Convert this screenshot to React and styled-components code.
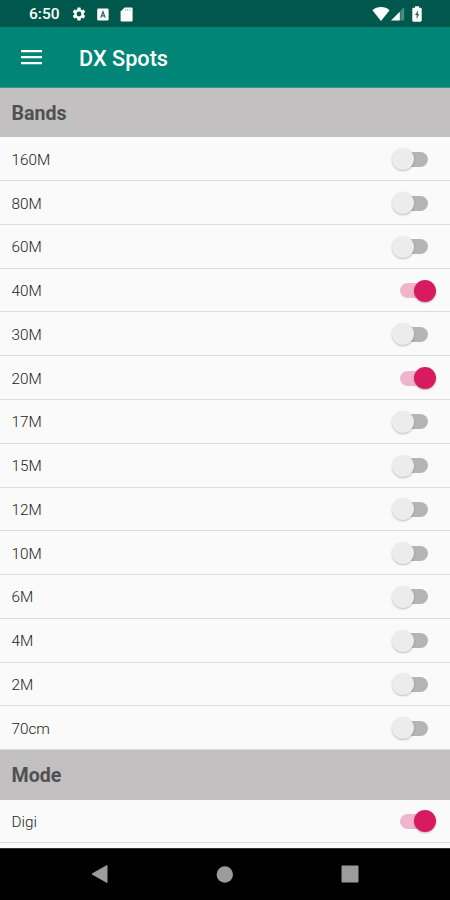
import React, { useState } from 'react';
import styled, { createGlobalStyle } from 'styled-components';

const GlobalStyle = createGlobalStyle`
  * {
    box-sizing: border-box;
  }

  body {
    margin: 0;
    background: #000;
    font-family: Roboto, "Liberation Sans", sans-serif;
    overflow: hidden;
  }
`;

const Screen = styled.div`
  display: flex;
  flex-direction: column;
  width: 450px;
  height: 900px;
  background: #fafafa;
`;

const StatusBar = styled.div`
  display: flex;
  align-items: center;
  justify-content: space-between;
  flex: none;
  height: 27px;
  padding: 1px 28px 0 29px;
  background: #00574b;
  color: #fff;
`;

const StatusGroup = styled.div`
  display: flex;
  align-items: center;
  gap: ${props => props.$gap}px;
`;

const Clock = styled.span`
  width: 31px;
  font-size: 15.5px;
  font-weight: 500;
  line-height: 18px;
`;

const Toolbar = styled.header`
  display: flex;
  align-items: center;
  flex: none;
  gap: 37.5px;
  height: 61px;
  padding: 0 20.5px;
  background: #008577;
  border-bottom: 1px solid #3d9389;
`;

const MenuButton = styled.button`
  display: flex;
  padding: 0;
  border: none;
  background: none;
  cursor: pointer;
`;

const Title = styled.h1`
  margin: 3px 0 0;
  color: #fff;
  font-size: 21.7px;
  font-weight: 500;
  line-height: 28px;
`;

const Content = styled.main`
  flex: 1;
  min-height: 0;
  overflow: hidden;
`;

const SectionHeader = styled.h2`
  display: flex;
  align-items: center;
  height: 49.4px;
  margin: 0;
  padding: 1px 11.5px 0;
  background: #c2c0c1;
  color: #505050;
  font-size: 19.6px;
  font-weight: 700;
`;

const Row = styled.div`
  display: flex;
  align-items: center;
  justify-content: space-between;
  height: 43.77px;
  padding: 1px 14px 0 11.5px;
  border-bottom: 1px solid #dcdcdc;
`;

const Label = styled.span`
  margin-top: 1px;
  color: #1c1c1c;
  font-size: 15.3px;
  font-weight: 300;
  line-height: 20px;
`;

const Switch = styled.button`
  display: flex;
  align-items: center;
  justify-content: ${props => (props.$on ? 'flex-end' : 'flex-start')};
  width: 44.5px;
  height: 24px;
  padding: 0;
  border: none;
  background: transparent;
  cursor: pointer;
`;

const Track = styled.span`
  flex: none;
  width: 28px;
  height: 15px;
  margin: ${props => (props.$on ? '0 -14px 0 0' : '0 0 0 -14px')};
  border-radius: 8px;
  background: ${props => (props.$on ? '#efb5cb' : '#b5b5b5')};
`;

const Thumb = styled.span`
  z-index: 1;
  flex: none;
  width: 22px;
  height: 22px;
  border-radius: 50%;
  background: ${props => (props.$on ? '#d81b60' : '#ececec')};
  box-shadow: 0 1px 2px rgba(0, 0, 0, 0.25);
`;

const NavBar = styled.nav`
  display: flex;
  align-items: center;
  justify-content: space-between;
  flex: none;
  height: 52px;
  padding: 0 91px 1px;
  background: #000;
  border-top: 1px solid #333;
`;

const bands = [
  ['160M', false],
  ['80M', false],
  ['60M', false],
  ['40M', true],
  ['30M', false],
  ['20M', true],
  ['17M', false],
  ['15M', false],
  ['12M', false],
  ['10M', false],
  ['6M', false],
  ['4M', false],
  ['2M', false],
  ['70cm', false],
];

const modes = [['Digi', true]];

function GearIcon() {
  return (
    <svg width="16" height="16" viewBox="0 0 24 24" fill="#fff">
      <path d="M19.14 12.94c.04-.3.06-.61.06-.94s-.02-.64-.07-.94l2.03-1.58a.49.49 0 0 0 .12-.61l-1.92-3.32a.49.49 0 0 0-.59-.22l-2.39.96c-.5-.38-1.03-.7-1.62-.94l-.36-2.54a.48.48 0 0 0-.48-.41h-3.84a.47.47 0 0 0-.47.41l-.36 2.54c-.59.24-1.13.57-1.62.94l-2.39-.96a.48.48 0 0 0-.59.22L2.74 8.87a.47.47 0 0 0 .12.61l2.03 1.58c-.05.3-.09.63-.09.94s.02.64.07.94l-2.03 1.58a.49.49 0 0 0-.12.61l1.92 3.32c.12.22.37.29.59.22l2.39-.96c.5.38 1.03.7 1.62.94l.36 2.54c.05.24.24.41.48.41h3.84c.24 0 .44-.17.47-.41l.36-2.54c.59-.24 1.13-.56 1.62-.94l2.39.96c.22.08.47 0 .59-.22l1.92-3.32a.47.47 0 0 0-.12-.61l-2.01-1.58zM12 15.6A3.6 3.6 0 1 1 12 8.4a3.6 3.6 0 0 1 0 7.2z" />
    </svg>
  );
}

function KeyboardIcon() {
  return (
    <svg width="12" height="13" viewBox="0 0 12 13">
      <rect x="0.2" y="0.5" width="11.4" height="12" rx="1.2" fill="#fff" />
      <path d="M3.8 9.6 6 3.8l2.2 5.8M4.6 7.8h2.8" fill="none" stroke="#24665c" strokeWidth="1.2" />
    </svg>
  );
}

function SdCardIcon() {
  return (
    <svg width="13" height="15" viewBox="0 0 13 15">
      <path d="M4.6.4h6.9c.7 0 1.1.4 1.1 1.1v12c0 .7-.4 1.1-1.1 1.1H1.7c-.7 0-1.1-.4-1.1-1.1v-9z" fill="#fff" />
      <path d="M5.4 1.8v2M7.600 1.8v2M9.8 1.8v2" stroke="#8db5af" strokeWidth="0.9" />
    </svg>
  );
}

function WifiIcon() {
  return (
    <svg width="18" height="14" viewBox="0 0 18 14">
      <path d="M9 14 .4 3.2C2.8 1.2 5.8 0 9 0s6.2 1.2 8.6 3.2z" fill="#fff" />
    </svg>
  );
}

function SignalIcon() {
  return (
    <svg width="14" height="14" viewBox="0 0 14 14">
      <path d="M13.2 0v13.5H9.4V4z" fill="#4d8a81" />
      <path d="M8.8 4.7v8.8H0z" fill="#fff" />
    </svg>
  );
}

const BatterySvg = styled.svg`
  margin-left: 6px;
`;

function BatteryIcon() {
  return (
    <BatterySvg width="10" height="16" viewBox="0 0 10 16">
      <path d="M3 .3h4v1.5h1.5c.7 0 1.2.5 1.2 1.2v11.5c0 .7-.5 1.2-1.2 1.2h-7c-.7 0-1.2-.5-1.2-1.2V3c0-.7.5-1.2 1.2-1.2H3z" fill="#fff" />
      <path d="M6.2 4.2 2.9 9h1.7v4.2L7.2 8H5.8z" fill="#2f6f65" />
    </BatterySvg>
  );
}

function MenuIcon() {
  return (
    <svg width="21" height="15" viewBox="0 0 21 15">
      <path d="M0 1.2h21M0 7.2h21M0 13.2h21" stroke="#fff" strokeWidth="2.2" />
    </svg>
  );
}

function ToggleRow({ label, initial }) {
  const [on, setOn] = useState(initial);

  return (
    <Row>
      <Label>{label}</Label>
      <Switch
        type="button"
        role="switch"
        aria-checked={on}
        aria-label={label}
        $on={on}
        onClick={() => setOn(!on)}
      >
        {on && <Track $on />}
        <Thumb $on={on} />
        {!on && <Track />}
      </Switch>
    </Row>
  );
}

export default function App() {
  return (
    <>
      <GlobalStyle />
      <Screen>
        <StatusBar>
          <StatusGroup $gap={10.5}>
            <Clock>6:50</Clock>
            <GearIcon />
            <KeyboardIcon />
            <SdCardIcon />
          </StatusGroup>
          <StatusGroup $gap={1}>
            <WifiIcon />
            <SignalIcon />
            <BatteryIcon />
          </StatusGroup>
        </StatusBar>
        <Toolbar>
          <MenuButton type="button" aria-label="Menu">
            <MenuIcon />
          </MenuButton>
          <Title>DX Spots</Title>
        </Toolbar>
        <Content>
          <SectionHeader>Bands</SectionHeader>
          {bands.map(([label, on]) => (
            <ToggleRow key={label} label={label} initial={on} />
          ))}
          <SectionHeader>Mode</SectionHeader>
          {modes.map(([label, on]) => (
            <ToggleRow key={label} label={label} initial={on} />
          ))}
        </Content>
        <NavBar>
          <svg width="17" height="18" viewBox="0 0 17 18">
            <path d="M1 9 16 .5v17z" fill="#9c9c9c" stroke="#9c9c9c" strokeLinejoin="round" />
          </svg>
          <svg width="17" height="17" viewBox="0 0 17 17">
            <circle cx="8.8" cy="8.5" r="8.2" fill="#9c9c9c" />
          </svg>
          <svg width="18" height="18" viewBox="0 0 18 18">
            <rect x="0.5" y="0.5" width="17" height="17" rx="1" fill="#9c9c9c" />
          </svg>
        </NavBar>
      </Screen>
    </>
  );
}
